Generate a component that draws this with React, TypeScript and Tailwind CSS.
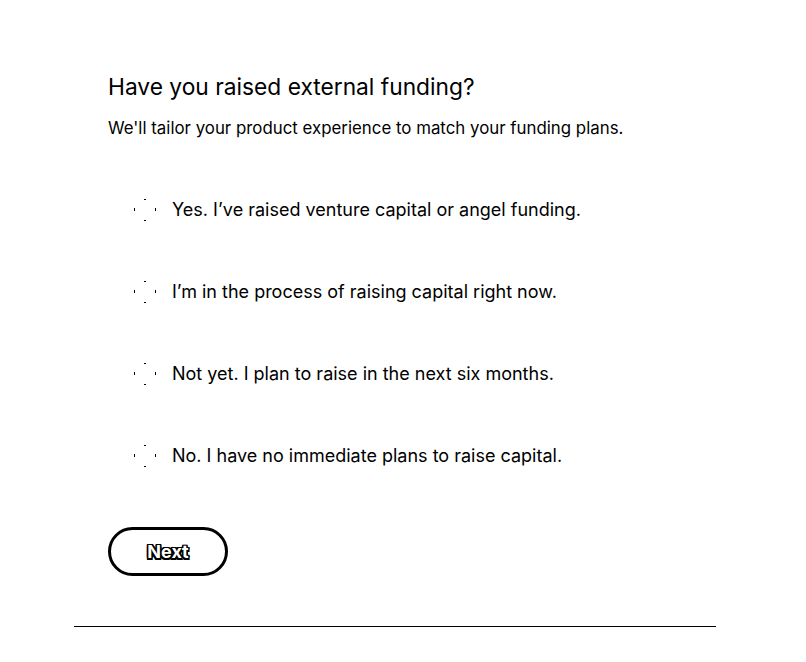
import { useState } from "react";

const options = [
  "Yes. I’ve raised venture capital or angel funding.",
  "I’m in the process of raising capital right now.",
  "Not yet. I plan to raise in the next six months.",
  "No. I have no immediate plans to raise capital.",
];

function DotRadio() {
  return (
    <svg width="24" height="24" viewBox="0 0 24 24" className="shrink-0">
      <rect x="11" y="1" width="2" height="1" fill="#000" />
      <rect x="11" y="22" width="2" height="1" fill="#000" />
      <rect x="1" y="10" width="1" height="3" fill="#000" />
      <rect x="22" y="10" width="1" height="3" fill="#000" />
    </svg>
  );
}

export default function App() {
  const [selected, setSelected] = useState<number | null>(null);

  return (
    <div className="min-h-screen bg-white text-black font-['Inter',sans-serif]">
      <div className="ml-[74px] w-[642px] pt-[72px]">
        <div className="pl-[34px]">
          <h1 className="text-[22.75px] leading-[30px] font-normal">
            Have you raised external funding?
          </h1>
          <p className="mt-[14px] text-[16.85px] leading-[24px]">
            We'll tailor your product experience to match your funding plans.
          </p>

          {/* Options */}
          <div className="mt-[58px] flex flex-col gap-[58px] pl-[25px]">
            {options.map((label, i) => (
              <label
                key={i}
                onClick={() => setSelected(i)}
                className="flex items-center gap-[15px] h-[24px] cursor-pointer"
              >
                <DotRadio />
                <span className="text-[18px] leading-[24px]">{label}</span>
              </label>
            ))}
          </div>

          <button className="mt-[59px] w-[120px] h-[49px] rounded-full border-[3px] border-black flex items-center justify-center">
            <span className="text-[18px] font-bold text-white [text-shadow:-1.5px_-1.5px_0_#000,1.5px_-1.5px_0_#000,-1.5px_1.5px_0_#000,1.5px_1.5px_0_#000,0_1.5px_0_#000,0_-1.5px_0_#000,1.5px_0_0_#000,-1.5px_0_0_#000]">
              Next
            </span>
          </button>
        </div>

        <div className="mt-[50px] h-px bg-black" />
      </div>
    </div>
  );
}
